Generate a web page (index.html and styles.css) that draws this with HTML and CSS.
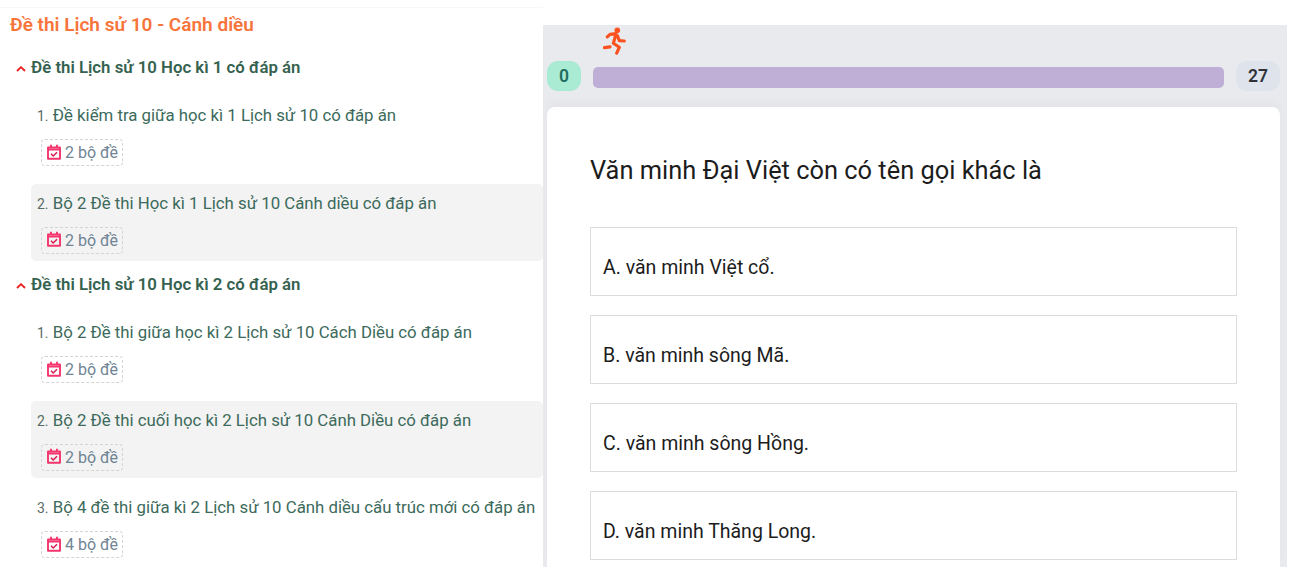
FILE: index.html
```html
<!DOCTYPE html>
<html lang="vi">
<head>
<meta charset="utf-8">
<title>Đề thi Lịch sử 10 - Cánh diều</title>
<link rel="stylesheet" href="styles.css">
</head>
<body>
<main class="page">
  <section class="catalog">
    <h1 class="catalog-title">Đề thi Lịch sử 10 - Cánh diều</h1>

    <h2 class="group-head">
      <svg class="chevron" viewBox="0 0 10 6"><path d="M1 5 5 1.2 9 5"/></svg>
      Đề thi Lịch sử 10 Học kì 1 có đáp án
    </h2>
    <ol class="items">
      <li class="item">
        <div class="item-title"><span class="num">1.</span> Đề kiểm tra giữa học kì 1 Lịch sử 10 có đáp án</div>
        <span class="tag"><svg class="cal" viewBox="0 0 16 16"><path class="cal-box" d="M2 3.5h12v11.2H2zM2 5.6h12M5 .8v3M11 .8v3"/><path class="cal-check" d="M5 9.8 7.2 12 11 8.2"/></svg>2 bộ đề</span>
      </li>
      <li class="item active">
        <div class="item-title"><span class="num">2.</span> Bộ 2 Đề thi Học kì 1 Lịch sử 10 Cánh diều có đáp án</div>
        <span class="tag"><svg class="cal" viewBox="0 0 16 16"><path class="cal-box" d="M2 3.5h12v11.2H2zM2 5.6h12M5 .8v3M11 .8v3"/><path class="cal-check" d="M5 9.8 7.2 12 11 8.2"/></svg>2 bộ đề</span>
      </li>
    </ol>

    <h2 class="group-head">
      <svg class="chevron" viewBox="0 0 10 6"><path d="M1 5 5 1.2 9 5"/></svg>
      Đề thi Lịch sử 10 Học kì 2 có đáp án
    </h2>
    <ol class="items">
      <li class="item">
        <div class="item-title"><span class="num">1.</span> Bộ 2 Đề thi giữa học kì 2 Lịch sử 10 Cách Diều có đáp án</div>
        <span class="tag"><svg class="cal" viewBox="0 0 16 16"><path class="cal-box" d="M2 3.5h12v11.2H2zM2 5.6h12M5 .8v3M11 .8v3"/><path class="cal-check" d="M5 9.8 7.2 12 11 8.2"/></svg>2 bộ đề</span>
      </li>
      <li class="item active">
        <div class="item-title"><span class="num">2.</span> Bộ 2 Đề thi cuối học kì 2 Lịch sử 10 Cánh Diều có đáp án</div>
        <span class="tag"><svg class="cal" viewBox="0 0 16 16"><path class="cal-box" d="M2 3.5h12v11.2H2zM2 5.6h12M5 .8v3M11 .8v3"/><path class="cal-check" d="M5 9.8 7.2 12 11 8.2"/></svg>2 bộ đề</span>
      </li>
      <li class="item">
        <div class="item-title"><span class="num">3.</span> Bộ 4 đề thi giữa kì 2 Lịch sử 10 Cánh diều cấu trúc mới có đáp án</div>
        <span class="tag"><svg class="cal" viewBox="0 0 16 16"><path class="cal-box" d="M2 3.5h12v11.2H2zM2 5.6h12M5 .8v3M11 .8v3"/><path class="cal-check" d="M5 9.8 7.2 12 11 8.2"/></svg>4 bộ đề</span>
      </li>
    </ol>
  </section>

  <section class="quiz">
    <div class="runner-row">
      <svg class="runner" viewBox="0 0 24 28">
        <circle class="runner-head" cx="14.3" cy="3.2" r="2.8"/>
        <path d="M4.3 9.8 7 7.3 13 6.6 10.4 16.3 16.3 20.3 13.7 26.2M14.3 8.6 16.3 13.6 21.3 14"/>
        <path d="M1.4 20.7 7 19.8"/>
      </svg>
    </div>
    <div class="progress">
      <span class="bubble bubble-start">0</span>
      <div class="bar"></div>
      <span class="bubble bubble-end">27</span>
    </div>
    <article class="card">
      <h2 class="question">Văn minh Đại Việt còn có tên gọi khác là</h2>
      <div class="options">
        <div class="option">A. văn minh Việt cổ.</div>
        <div class="option">B. văn minh sông Mã.</div>
        <div class="option">C. văn minh sông Hồng.</div>
        <div class="option">D. văn minh Thăng Long.</div>
      </div>
    </article>
  </section>
</main>
</body>
</html>
```
FILE: styles.css
```css
* { box-sizing: border-box; }
html, body { margin: 0; padding: 0; background: #fff; }
body { font-family: Roboto, "Noto Sans", sans-serif; overflow: hidden; }
.page { display: flex; width: 1293px; height: 567px; padding-right: 6px; }

.catalog { width: 543px; flex: none; overflow: hidden; margin-top: 7px; padding-top: 6px; border-top: 1px solid #f8f8f8; }
.catalog-title { margin: 0 0 0 10px; font-size: 19px; line-height: 22px; font-weight: 600; color: #f7743a; }
.group-head { margin: 12px 0 0 0; padding-left: 16px; display: flex; align-items: center; gap: 5px; font-size: 16.8px; line-height: 22px; font-weight: 600; color: #35624f; white-space: nowrap; }
.catalog-title + .group-head { margin-top: 20px; }
.chevron { width: 10px; height: 6px; flex: none; margin-top: 3px; fill: none; stroke: #ee1c1c; stroke-width: 1.8; }
.items { list-style: none; margin: 18px 0 0 31px; padding: 0; display: flex; flex-direction: column; gap: 10px; }
.item { height: 77.5px; padding: 5px 0 0 6px; border-radius: 5px; }
.item.active { background: #f3f3f3; }
.item-title { font-size: 16.8px; line-height: 28px; color: #3c6a5b; white-space: nowrap; }
.num { font-size: 14px; color: #5a6b66; }
.tag { display: inline-flex; align-items: center; height: 27px; margin: 9px 0 0 4px; padding: 0 4px; gap: 3px; border: 1px dashed #d4d4d4; border-radius: 4px; font-size: 16px; color: #6f8494; }
.cal { width: 16px; height: 16px; flex: none; fill: none; margin-bottom: 2px; }
.cal-box { stroke: #f5356c; stroke-width: 1.9; stroke-linejoin: round; }
.cal-check { stroke: #d81b50; stroke-width: 1.5; }

.quiz { flex: 1; margin-top: 25px; background: #e9eaee; padding: 0 7px 0 4px; display: flex; flex-direction: column; }
.runner-row { height: 36px; padding: 2px 0 0 56px; }
.runner { width: 24px; height: 28px; display: block; fill: none; stroke: #fc5220; stroke-width: 3.2; stroke-linecap: round; stroke-linejoin: round; }
.runner-head { fill: #fc5220; stroke: none; }
.progress { display: flex; align-items: center; height: 30px; gap: 12px; }
.bubble { height: 30px; border-radius: 11px; display: flex; align-items: center; justify-content: center; font-size: 17.5px; font-weight: 600; flex: none; }
.bubble-start { width: 34px; background: #a9ebd3; color: #1f6f62; }
.bubble-end { width: 44px; background: #dfe3ec; color: #2f3338; }
.bar { flex: 1; height: 21px; margin-top: 2px; border-radius: 5px; background: #bfaed6; }
.card { flex: 1; margin-top: 16px; background: #fff; border-radius: 8px 8px 0 0; padding: 48px 43px 0; min-height: 0; box-shadow: 0 -6px 10px rgba(0, 0, 0, .025); }
.question { margin: 0; font-size: 25.4px; line-height: 30px; font-weight: 400; color: #1c1c1c; }
.options { display: flex; flex-direction: column; gap: 19px; margin-top: 42px; }
.option { height: 69px; padding: 28px 12px 0; border: 1px solid #dcdcdc; font-size: 19.5px; line-height: 24px; color: #1c1c1c; }
```
